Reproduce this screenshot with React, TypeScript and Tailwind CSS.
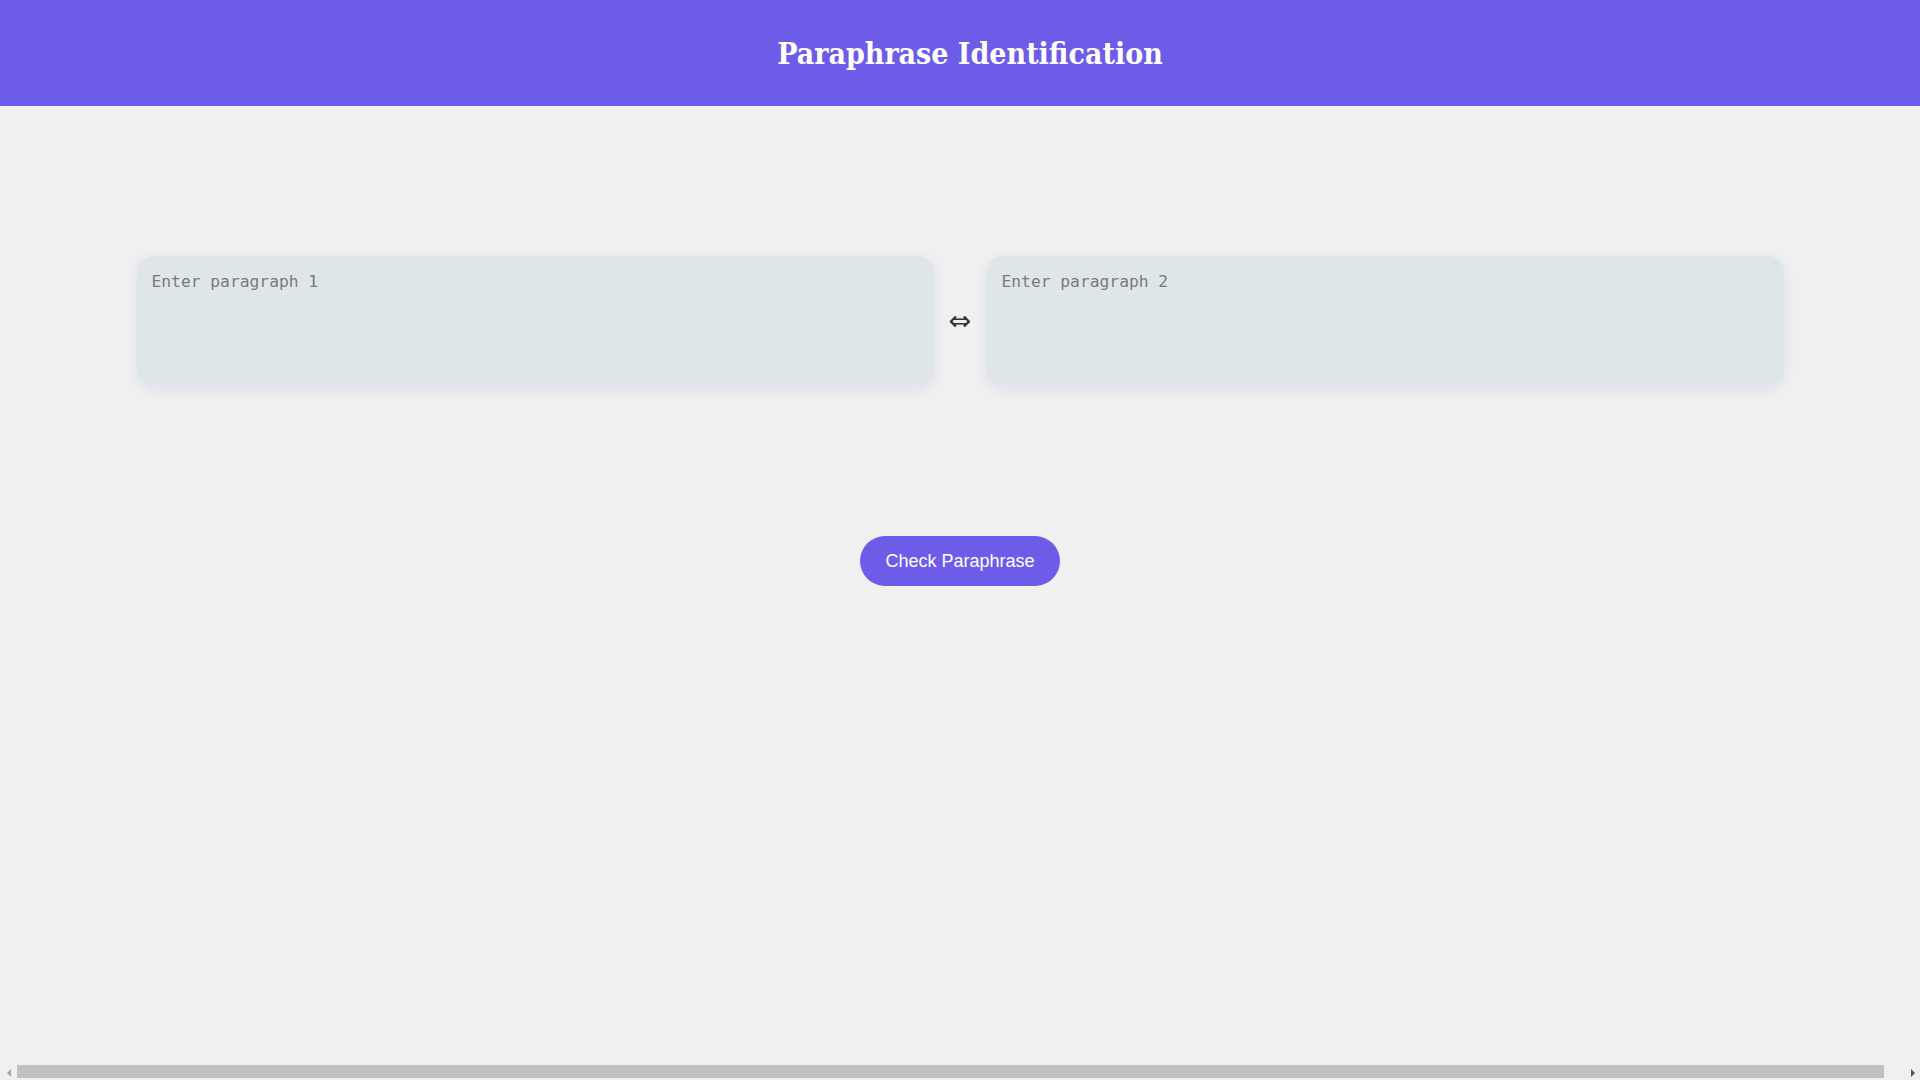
import React from "react";

export default function App() {
  return (
    <div className="min-h-screen bg-[#f0f0f0]">
      <header className="w-[1940px] h-[106px] bg-[#6c5ce7] flex items-center justify-center">
        <h1 className="text-white font-bold text-[30px] leading-none pt-[1px] font-['DejaVu_Serif',serif] [font-stretch:condensed]">
          Paraphrase Identification
        </h1>
      </header>
      <main className="w-[1920px] flex flex-col items-center">
        <div className="flex items-center mt-[150px]">
          <textarea
            placeholder="Enter paragraph 1"
            className="w-[797px] h-[129px] resize-none rounded-[16px] bg-[#dfe6e9] px-[15px] pt-[16px] pb-[14px] text-[16.3px] leading-[20px] text-[#2d3436] placeholder:text-[#7a7a7a] font-['DejaVu_Sans_Mono',monospace] outline-none shadow-[0_4px_14px_rgba(108,92,231,0.12)]"
          />
          <span className="mx-[14px] w-[25px] text-center text-[27px] leading-none text-[#333] font-['DejaVu_Sans',sans-serif]">
            ⇔
          </span>
          <textarea
            placeholder="Enter paragraph 2"
            className="w-[797px] h-[129px] resize-none rounded-[16px] bg-[#dfe6e9] px-[15px] pt-[16px] pb-[14px] text-[16.3px] leading-[20px] text-[#2d3436] placeholder:text-[#7a7a7a] font-['DejaVu_Sans_Mono',monospace] outline-none shadow-[0_4px_14px_rgba(108,92,231,0.12)]"
          />
        </div>
        <button className="mt-[151px] w-[200px] h-[50px] rounded-full bg-[#6c5ce7] text-white text-[18px] font-['Liberation_Sans',Arial,sans-serif]">
          Check Paraphrase
        </button>
      </main>
      <div className="fixed bottom-0 left-0 w-[1920px] h-[15px] bg-[#f0f0f0] flex items-center">
        <div className="w-[17px] h-[15px] flex items-center justify-center">
          <div className="w-0 h-0 border-y-[4px] border-y-transparent border-r-[4px] border-r-[#a3a3a3]" />
        </div>
        <div className="w-[1867px] h-[13px] mb-[2px] bg-[#c1c1c1]" />
        <div className="flex-1 h-[15px] flex items-center justify-end pr-[5px]">
          <div className="w-0 h-0 border-y-[4px] border-y-transparent border-l-[4px] border-l-[#505050]" />
        </div>
      </div>
    </div>
  );
}
